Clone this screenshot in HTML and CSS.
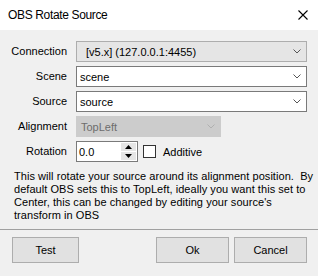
FILE: index.html
```html
<!DOCTYPE html>
<html>
<head>
<meta charset="utf-8">
<link rel="stylesheet" href="styles.css">
</head>
<body>
<div class="window">
  <div class="titlebar">
    <span class="title">OBS Rotate Source</span>
    <svg class="close" width="10" height="10" viewBox="0 0 10 10"><path d="M0.5 0.5 L9.5 9.5 M9.5 0.5 L0.5 9.5" stroke="#000" stroke-width="1.1" fill="none"/></svg>
  </div>
  <div class="client">
    <div class="form">
      <label class="lbl">Connection</label>
      <div class="combo combo-list"><span class="val">[v5.x] (127.0.0.1:4455)</span><svg class="chev" width="8" height="5" viewBox="0 0 8 5"><path d="M0.5 0.5 L4 4 L7.5 0.5" stroke="#555" fill="none"/></svg></div>
      <label class="lbl">Scene</label>
      <div class="combo combo-edit"><span class="val">scene</span><svg class="chev" width="8" height="5" viewBox="0 0 8 5"><path d="M0.5 0.5 L4 4 L7.5 0.5" stroke="#555" fill="none"/></svg></div>
      <label class="lbl">Source</label>
      <div class="combo combo-edit"><span class="val">source</span><svg class="chev" width="8" height="5" viewBox="0 0 8 5"><path d="M0.5 0.5 L4 4 L7.5 0.5" stroke="#555" fill="none"/></svg></div>
      <label class="lbl">Alignment</label>
      <div class="combo combo-disabled"><span class="val">TopLeft</span><svg class="chev" width="8" height="5" viewBox="0 0 8 5"><path d="M0.5 0.5 L4 4 L7.5 0.5" stroke="#b0b0b0" fill="none"/></svg></div>
      <label class="lbl">Rotation</label>
      <div class="rot-row">
        <div class="numeric">
          <span class="val">0.0</span>
          <div class="spin">
            <div class="spin-btn"><svg width="7" height="4" viewBox="0 0 7 4"><path d="M0 4 L3.5 0 L7 4 Z" fill="#000"/></svg></div>
            <div class="spin-btn"><svg width="7" height="4" viewBox="0 0 7 4"><path d="M0 0 L3.5 4 L7 0 Z" fill="#000"/></svg></div>
          </div>
        </div>
        <div class="check"><span class="box"></span><span class="check-lbl">Additive</span></div>
      </div>
    </div>
    <p class="desc">This will rotate your source around its alignment position.&nbsp; By<br>default OBS sets this to TopLeft, ideally you want this set to<br>Center, this can be changed by editing your source's<br>transform in OBS</p>
    <div class="sep"></div>
    <div class="footer">
      <button class="btn btn-test">Test</button>
      <div class="spacer"></div>
      <button class="btn">Ok</button>
      <button class="btn">Cancel</button>
    </div>
  </div>
</div>
</body>
</html>
```
FILE: styles.css
```css
* { box-sizing: border-box; }
html, body { margin: 0; padding: 0; }
body {
  width: 318px;
  height: 276px;
  overflow: hidden;
  background: #f0f0f0;
  font-family: "Liberation Sans", Arial, sans-serif;
  font-size: 11px;
  color: #000;
}
.window { width: 318px; height: 276px; display: flex; flex-direction: column; }
.titlebar {
  height: 30px;
  background: #fff;
  display: flex;
  align-items: center;
  padding: 0 10px 0 8px;
}
.title { font-size: 12px; letter-spacing: -0.35px; flex: 1; padding-bottom: 1px; }
.close { margin-top: -1px; }
.client { flex: 1; background: #f0f0f0; padding-top: 11px; }
.form {
  display: grid;
  grid-template-columns: 67px 231px;
  column-gap: 9px;
  row-gap: 4px;
  grid-auto-rows: 21px;
}
.lbl { text-align: right; align-self: center; line-height: 13px; }
.combo {
  display: flex;
  align-items: center;
  border: 1px solid #7a7a7a;
  background: #fff;
  padding: 0 4px 0 3px;
}
.combo .val { flex: 1; white-space: nowrap; }
.combo .chev { margin-right: 1px; }
.combo-list { background: #e5e5e5; border-color: #adadad; padding-left: 9px; }
.combo-disabled { background: #cccccc; border-color: #cccccc; width: 145px; padding-left: 4px; color: #6d6d6d; }
.rot-row { display: flex; align-items: center; }
.numeric {
  width: 62px;
  height: 21px;
  border: 1px solid #7a7a7a;
  background: #fff;
  display: flex;
  padding-left: 2px;
}
.numeric .val { flex: 1; align-self: center; }
.spin { width: 16px; display: flex; flex-direction: column; padding: 1px 1px 1px 0; gap: 1px; }
.spin-btn { flex: 1; background: #e5e5e5; display: flex; align-items: center; justify-content: center; }
.check { display: flex; align-items: center; margin-left: 5px; }
.box { width: 13px; height: 13px; border: 1px solid #333; background: #fff; }
.check-lbl { margin-left: 7px; }
.desc { margin: 8px 0 0 14px; line-height: 13px; white-space: nowrap; letter-spacing: 0.05px; }
.sep { height: 1px; background: #a0a0a0; margin-top: 7px; }
.footer { display: flex; padding: 7px 11px 0 12px; gap: 5px; }
.spacer { flex: 1; }
.btn {
  height: 26px;
  width: 73px;
  background: #e1e1e1;
  border: 1px solid #adadad;
  font-family: "Liberation Sans", Arial, sans-serif;
  font-size: 11px;
  color: #000;
  padding: 0;
}
.btn-test { width: 67px; }
```
